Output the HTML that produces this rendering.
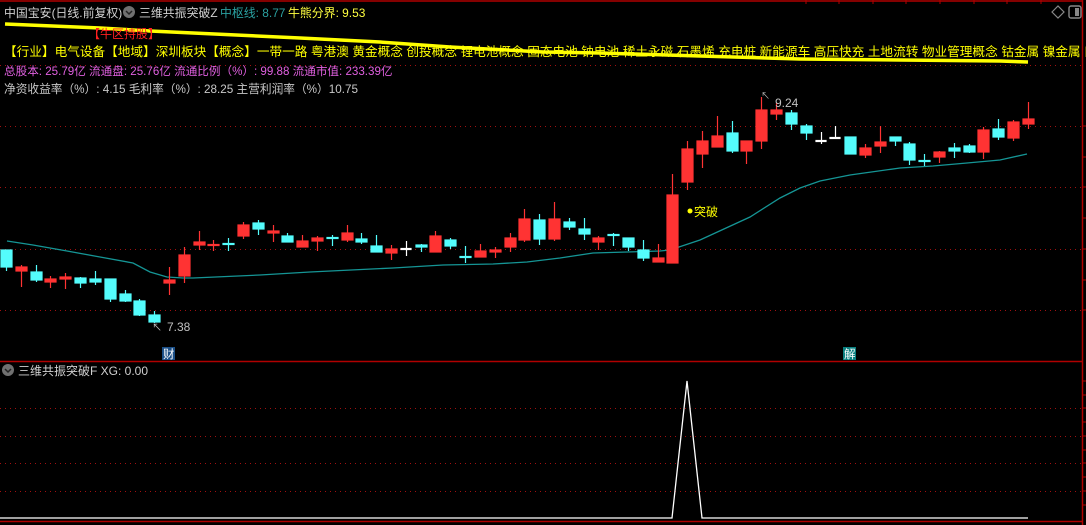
<!DOCTYPE html>
<html><head><meta charset="utf-8"><style>
body{margin:0;background:#000;width:1086px;height:525px;overflow:hidden;font-family:"Liberation Sans","Noto Sans CJK SC",sans-serif}
svg{display:block}
text{font-family:"Liberation Sans","Noto Sans CJK SC",sans-serif}
</style></head><body>
<svg width="1086" height="525" viewBox="0 0 1086 525" xmlns="http://www.w3.org/2000/svg">
<rect width="1086" height="525" fill="#000"/>
<line x1="0" y1="1" x2="1082" y2="1" stroke="#b00000" stroke-width="1.5"/>
<line x1="1082.5" y1="0" x2="1082.5" y2="525" stroke="#b00000" stroke-width="1.5"/>
<line x1="0" y1="361.5" x2="1082" y2="361.5" stroke="#b00000" stroke-width="1.5"/>
<line x1="0" y1="521.5" x2="1082" y2="521.5" stroke="#b00000" stroke-width="1.5"/>
<g stroke="#b00000" stroke-width="1">
<line x1="806" y1="0" x2="806" y2="4"/><line x1="839" y1="0" x2="839" y2="4"/><line x1="873" y1="0" x2="873" y2="4"/><line x1="906" y1="0" x2="906" y2="4"/><line x1="940" y1="0" x2="940" y2="4"/><line x1="974" y1="0" x2="974" y2="4"/><line x1="1007" y1="0" x2="1007" y2="4"/><line x1="1041" y1="0" x2="1041" y2="4"/>
<line x1="1082" y1="126" x2="1086" y2="126"/><line x1="1082" y1="157" x2="1086" y2="157"/><line x1="1082" y1="187" x2="1086" y2="187"/><line x1="1082" y1="218" x2="1086" y2="218"/><line x1="1082" y1="249" x2="1086" y2="249"/><line x1="1082" y1="280" x2="1086" y2="280"/><line x1="1082" y1="310" x2="1086" y2="310"/>
<line x1="1082" y1="381" x2="1086" y2="381"/><line x1="1082" y1="395" x2="1086" y2="395"/><line x1="1082" y1="408" x2="1086" y2="408"/><line x1="1082" y1="422" x2="1086" y2="422"/><line x1="1082" y1="436" x2="1086" y2="436"/><line x1="1082" y1="450" x2="1086" y2="450"/><line x1="1082" y1="463" x2="1086" y2="463"/><line x1="1082" y1="477" x2="1086" y2="477"/><line x1="1082" y1="491" x2="1086" y2="491"/><line x1="1082" y1="505" x2="1086" y2="505"/>
</g>
<g stroke="#a01010" stroke-width="1" stroke-dasharray="1 4">
<line x1="0" y1="65.5" x2="1082" y2="65.5"/><line x1="0" y1="126.5" x2="1082" y2="126.5"/><line x1="0" y1="187.5" x2="1082" y2="187.5"/><line x1="0" y1="249.5" x2="1082" y2="249.5"/><line x1="0" y1="310.5" x2="1082" y2="310.5"/>
<line x1="0" y1="408.5" x2="1082" y2="408.5"/><line x1="0" y1="436.5" x2="1082" y2="436.5"/><line x1="0" y1="463.5" x2="1082" y2="463.5"/><line x1="0" y1="491.5" x2="1082" y2="491.5"/>
</g>
<polyline points="5,24 100,28 150,31 300,38 380,42 450,47 543,52 600,53 700,56 800,59 900,60 1000,61 1028,62" fill="none" stroke="#ffff00" stroke-width="3.5"/>
<text x="4" y="17" font-size="11.9" fill="#d0d0d0">中国宝安(日线.前复权)</text>
<circle cx="129" cy="12" r="6" fill="#707070"/><path d="M126 11l3 3 3-3" stroke="#222" stroke-width="1.5" fill="none"/>
<text x="139" y="17" font-size="11.9" fill="#d0d0d0">三维共振突破Z</text>
<text x="220" y="17" font-size="11.9" fill="#2aa0a0">中枢线: 8.77</text>
<text x="288" y="17" font-size="11.9" fill="#ffff40">牛熊分界: 9.53</text>
<path d="M1052 12l6-6 6 6-6 6z" fill="none" stroke="#888" stroke-width="1.2"/>
<rect x="1069" y="6" width="12" height="12" rx="2" fill="none" stroke="#888" stroke-width="1.4"/><rect x="1075" y="8" width="4" height="8" fill="#888"/>
<text x="88" y="38" font-size="12" fill="#ff2020">【牛区持股】</text>
<text x="4" y="56" font-size="12.65" fill="#ffff00">【行业】电气设备【地域】深圳板块【概念】一带一路 粤港澳 黄金概念 创投概念 锂电池概念 固态电池 钠电池 稀土永磁 石墨烯 充电桩 新能源车 高压快充 土地流转 物业管理概念 钴金属 镍金属 口罩防护</text>
<text x="4" y="75" font-size="11.6" fill="#e060e0">总股本: 25.79亿 流通盘: 25.76亿 流通比例（%）: 99.88 流通市值: 233.39亿</text>
<text x="4" y="93" font-size="11.7" fill="#c8c8c8">净资收益率（%）: 4.15 毛利率（%）: 28.25 主营利润率（%）10.75</text>
<polyline points="7,241 33,245 67,251 100,257 133,263 150,272 167,277 183,278 193,278 260,275 310,272 393,268 443,265 493,264 527,262 560,258 593,253 627,252 660,251 670,250 700,240 750,217 780,198 800,188 820,181 850,175 900,168 933,166 967,163 1000,160 1027,154" fill="none" stroke="#159595" stroke-width="1.3"/>
<g stroke-width="1.2">
<g stroke="#54fcfc" fill="#54fcfc">
<line x1="6.5" y1="250" x2="6.5" y2="271"/><rect x="1" y="250" width="11" height="17"/>
<line x1="36.5" y1="265" x2="36.5" y2="282"/><rect x="31" y="272" width="11" height="8"/>
<line x1="80.5" y1="277" x2="80.5" y2="288"/><rect x="75" y="278" width="11" height="5"/>
<line x1="95.5" y1="271" x2="95.5" y2="285"/><rect x="90" y="279" width="11" height="3"/>
<line x1="110.5" y1="279" x2="110.5" y2="302"/><rect x="105" y="279" width="11" height="20"/>
<line x1="125.5" y1="290" x2="125.5" y2="302"/><rect x="120" y="294" width="11" height="7"/>
<line x1="139.5" y1="299" x2="139.5" y2="316"/><rect x="134" y="301" width="11" height="14"/>
<line x1="154.5" y1="311" x2="154.5" y2="323"/><rect x="149" y="315" width="11" height="7"/>
<line x1="228.5" y1="238" x2="228.5" y2="251"/><rect x="223" y="243.5" width="11" height="1"/>
<line x1="258.5" y1="220" x2="258.5" y2="235"/><rect x="253" y="223" width="11" height="6"/>
<line x1="287.5" y1="233" x2="287.5" y2="242"/><rect x="282" y="236" width="11" height="6"/>
<line x1="332.5" y1="235" x2="332.5" y2="246"/><rect x="327" y="237.5" width="11" height="1"/>
<line x1="361.5" y1="233" x2="361.5" y2="244"/><rect x="356" y="239" width="11" height="3"/>
<line x1="376.5" y1="235" x2="376.5" y2="252"/><rect x="371" y="246" width="11" height="6"/>
<line x1="421.5" y1="244" x2="421.5" y2="252"/><rect x="416" y="245" width="11" height="2"/>
<line x1="450.5" y1="238" x2="450.5" y2="249"/><rect x="445" y="240" width="11" height="6"/>
<line x1="465.5" y1="246" x2="465.5" y2="263"/><rect x="460" y="256.5" width="11" height="1"/>
<line x1="539.5" y1="214" x2="539.5" y2="245"/><rect x="534" y="220" width="11" height="19"/>
<line x1="569.5" y1="218" x2="569.5" y2="230"/><rect x="564" y="222" width="11" height="5"/>
<line x1="584.5" y1="218" x2="584.5" y2="240"/><rect x="579" y="229" width="11" height="5"/>
<line x1="613.5" y1="233" x2="613.5" y2="246"/><rect x="608" y="234.5" width="11" height="1"/>
<line x1="628.5" y1="238" x2="628.5" y2="251"/><rect x="623" y="238" width="11" height="9"/>
<line x1="643.5" y1="240" x2="643.5" y2="261"/><rect x="638" y="250" width="11" height="8"/>
<line x1="732.5" y1="121" x2="732.5" y2="153"/><rect x="727" y="133" width="11" height="18"/>
<line x1="791.5" y1="110" x2="791.5" y2="130"/><rect x="786" y="113" width="11" height="11"/>
<line x1="806.5" y1="124" x2="806.5" y2="140"/><rect x="801" y="126" width="11" height="7"/>
<line x1="850.5" y1="137" x2="850.5" y2="154"/><rect x="845" y="137" width="11" height="17"/>
<line x1="895.5" y1="137" x2="895.5" y2="146"/><rect x="890" y="137" width="11" height="4"/>
<line x1="909.5" y1="142" x2="909.5" y2="165"/><rect x="904" y="144" width="11" height="16"/>
<line x1="924.5" y1="154" x2="924.5" y2="166"/><rect x="919" y="160.5" width="11" height="1"/>
<line x1="954.5" y1="143" x2="954.5" y2="158"/><rect x="949" y="148" width="11" height="3"/>
<line x1="969.5" y1="144" x2="969.5" y2="153"/><rect x="964" y="146" width="11" height="6"/>
<line x1="998.5" y1="119" x2="998.5" y2="140"/><rect x="993" y="129" width="11" height="8"/>
</g>
<g stroke="#ff3333" fill="#ff3333">
<line x1="21.5" y1="265" x2="21.5" y2="287"/><rect x="16" y="267" width="11" height="4"/>
<line x1="50.5" y1="276" x2="50.5" y2="288"/><rect x="45" y="279" width="11" height="3"/>
<line x1="65.5" y1="273" x2="65.5" y2="289"/><rect x="60" y="277" width="11" height="2"/>
<line x1="169.5" y1="267" x2="169.5" y2="295"/><rect x="164" y="280" width="11" height="3"/>
<line x1="184.5" y1="247" x2="184.5" y2="283"/><rect x="179" y="255" width="11" height="21"/>
<line x1="199.5" y1="231" x2="199.5" y2="250"/><rect x="194" y="242" width="11" height="3"/>
<line x1="213.5" y1="240" x2="213.5" y2="251"/><rect x="208" y="244.5" width="11" height="1"/>
<line x1="243.5" y1="222" x2="243.5" y2="239"/><rect x="238" y="225" width="11" height="11"/>
<line x1="273.5" y1="225" x2="273.5" y2="242"/><rect x="268" y="231" width="11" height="2"/>
<line x1="302.5" y1="235" x2="302.5" y2="247"/><rect x="297" y="241" width="11" height="6"/>
<line x1="317.5" y1="236" x2="317.5" y2="251"/><rect x="312" y="238" width="11" height="3"/>
<line x1="347.5" y1="225" x2="347.5" y2="242"/><rect x="342" y="233" width="11" height="7"/>
<line x1="391.5" y1="245" x2="391.5" y2="260"/><rect x="386" y="249" width="11" height="4"/>
<line x1="435.5" y1="231" x2="435.5" y2="252"/><rect x="430" y="236" width="11" height="16"/>
<line x1="480.5" y1="244" x2="480.5" y2="257"/><rect x="475" y="251" width="11" height="6"/>
<line x1="495.5" y1="247" x2="495.5" y2="258"/><rect x="490" y="250" width="11" height="2"/>
<line x1="510.5" y1="233" x2="510.5" y2="252"/><rect x="505" y="238" width="11" height="9"/>
<line x1="524.5" y1="209" x2="524.5" y2="242"/><rect x="519" y="219" width="11" height="21"/>
<line x1="554.5" y1="202" x2="554.5" y2="241"/><rect x="549" y="219" width="11" height="20"/>
<line x1="598.5" y1="236" x2="598.5" y2="250"/><rect x="593" y="238" width="11" height="4"/>
<line x1="658.5" y1="244" x2="658.5" y2="262"/><rect x="653" y="258" width="11" height="4"/>
<line x1="672.5" y1="174" x2="672.5" y2="263"/><rect x="667" y="195" width="11" height="68"/>
<line x1="687.5" y1="141" x2="687.5" y2="190"/><rect x="682" y="149" width="11" height="33"/>
<line x1="702.5" y1="131" x2="702.5" y2="168"/><rect x="697" y="141" width="11" height="13"/>
<line x1="717.5" y1="116" x2="717.5" y2="147"/><rect x="712" y="136" width="11" height="11"/>
<line x1="746.5" y1="141" x2="746.5" y2="164"/><rect x="741" y="141" width="11" height="10"/>
<line x1="761.5" y1="97" x2="761.5" y2="149"/><rect x="756" y="110" width="11" height="31"/>
<line x1="776.5" y1="103" x2="776.5" y2="120"/><rect x="771" y="110" width="11" height="4"/>
<line x1="865.5" y1="144" x2="865.5" y2="158"/><rect x="860" y="148" width="11" height="7"/>
<line x1="880.5" y1="126" x2="880.5" y2="153"/><rect x="875" y="142" width="11" height="4"/>
<line x1="939.5" y1="151" x2="939.5" y2="163"/><rect x="934" y="152" width="11" height="5"/>
<line x1="983.5" y1="127" x2="983.5" y2="159"/><rect x="978" y="130" width="11" height="22"/>
<line x1="1013.5" y1="120" x2="1013.5" y2="141"/><rect x="1008" y="122" width="11" height="16"/>
<line x1="1028.5" y1="102" x2="1028.5" y2="129"/><rect x="1023" y="119" width="11" height="5"/>
</g>
<g stroke="#ffffff" fill="#ffffff">
<line x1="406.5" y1="241" x2="406.5" y2="256"/><rect x="401" y="248.5" width="10" height="1"/>
<line x1="821.5" y1="132" x2="821.5" y2="144"/><rect x="816" y="140.5" width="10" height="1"/>
<line x1="835.5" y1="126" x2="835.5" y2="139"/><rect x="830" y="137.5" width="10" height="1"/>
</g>
</g>
<text x="761" y="99" font-size="9" fill="#c0c0c0">↖</text>
<text x="775" y="107" font-size="12" fill="#c0c0c0">9.24</text>
<text x="152" y="331" font-size="10" fill="#c0c0c0">↖</text>
<text x="167" y="331" font-size="12" fill="#c0c0c0">7.38</text>
<circle cx="690" cy="211" r="2.5" fill="#ffff00"/>
<text x="694" y="216" font-size="12" fill="#ffff00">突破</text>
<rect x="162" y="347" width="13" height="13" fill="#1a4e86"/>
<text x="163" y="358" font-size="11.5" fill="#ffffff">财</text>
<rect x="843" y="347" width="13" height="13" fill="#0a8080"/>
<text x="844" y="358" font-size="11.5" fill="#ffffff">解</text>
<circle cx="8" cy="370" r="6" fill="#707070"/><path d="M5 369l3 3 3-3" stroke="#222" stroke-width="1.5" fill="none"/>
<text x="18" y="375" font-size="12" fill="#d0d0d0">三维共振突破F  XG: 0.00</text>
<polyline points="0,518 672,518 687,381 702,518 1028,518" fill="none" stroke="#ffffff" stroke-width="1.3"/>
</svg>
</body></html>
